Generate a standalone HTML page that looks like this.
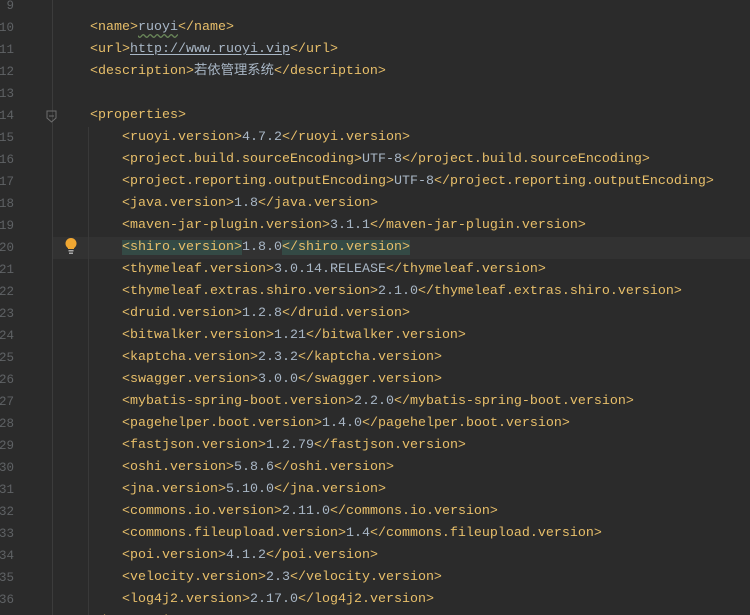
<!DOCTYPE html>
<html style="overflow:hidden;height:615px"><head><style>
body{margin:0;width:750px;height:615px;overflow:hidden;background:#2b2b2b;font-family:"Liberation Mono","Noto Sans CJK SC",monospace;font-size:13.33px;position:relative}
.g{position:absolute;left:0;top:0;width:52px;height:615px;background:#2b2b2b;border-right:1px solid #3c3c3c}
.cur{position:absolute;left:53px;width:697px;height:22px;top:237px;background:#323232}
.ln{position:absolute;left:-10px;width:24px;text-align:right;color:#5f6265;font-size:12.5px;line-height:22px}
.l{position:absolute;line-height:22px;white-space:pre;color:#a9b7c6}
.t{color:#e8bf6a}
.h{background:#344a45}
.ig{position:absolute;left:88px;top:127px;width:1px;height:488px;background:#393939}
.sq{text-decoration:underline wavy #6a8759;text-underline-offset:3px}
</style></head><body>
<div class="g"></div>
<div class="cur"></div>
<div class="ig"></div>
<div id="c"></div>
<svg style="position:absolute;left:46px;top:110px" width="11" height="13"><path d="M1 1H10V8L5.5 12L1 8Z" fill="none" stroke="#6e6e6e"/><path d="M3 6H8" stroke="#6e6e6e"/></svg>
<svg style="position:absolute;left:64px;top:237px" width="14" height="18"><circle cx="7" cy="6.5" r="5.5" fill="#f0a732"/><rect x="4" y="10" width="6" height="2" fill="#f0a732"/><rect x="4.5" y="13" width="5" height="1.5" fill="#aaa"/><rect x="5" y="15.5" width="4" height="1.5" fill="#aaa"/></svg>
<script>
var L=[
[9,0,''],[10,90,'<name>','ruoyi','</name>'],[11,90,'<url>','http://www.ruoyi.vip','</url>'],[12,90,'<description>','若依管理系统','</description>'],[13,0,''],[14,90,'<properties>','',''],
[15,122,'<ruoyi.version>','4.7.2','</ruoyi.version>'],
[16,122,'<project.build.sourceEncoding>','UTF-8','</project.build.sourceEncoding>'],
[17,122,'<project.reporting.outputEncoding>','UTF-8','</project.reporting.outputEncoding>'],
[18,122,'<java.version>','1.8','</java.version>'],
[19,122,'<maven-jar-plugin.version>','3.1.1','</maven-jar-plugin.version>'],
[20,122,'<shiro.version>','1.8.0','</shiro.version>'],
[21,122,'<thymeleaf.version>','3.0.14.RELEASE','</thymeleaf.version>'],
[22,122,'<thymeleaf.extras.shiro.version>','2.1.0','</thymeleaf.extras.shiro.version>'],
[23,122,'<druid.version>','1.2.8','</druid.version>'],
[24,122,'<bitwalker.version>','1.21','</bitwalker.version>'],
[25,122,'<kaptcha.version>','2.3.2','</kaptcha.version>'],
[26,122,'<swagger.version>','3.0.0','</swagger.version>'],
[27,122,'<mybatis-spring-boot.version>','2.2.0','</mybatis-spring-boot.version>'],
[28,122,'<pagehelper.boot.version>','1.4.0','</pagehelper.boot.version>'],
[29,122,'<fastjson.version>','1.2.79','</fastjson.version>'],
[30,122,'<oshi.version>','5.8.6','</oshi.version>'],
[31,122,'<jna.version>','5.10.0','</jna.version>'],
[32,122,'<commons.io.version>','2.11.0','</commons.io.version>'],
[33,122,'<commons.fileupload.version>','1.4','</commons.fileupload.version>'],
[34,122,'<poi.version>','4.1.2','</poi.version>'],
[35,122,'<velocity.version>','2.3','</velocity.version>'],
[36,122,'<log4j2.version>','2.17.0','</log4j2.version>'],
[37,90,'</properties>','','']];
function e(s){return s.replace(/&/g,'&amp;').replace(/</g,'&lt;').replace(/>/g,'&gt;')}
var h='';
L.forEach(function(r){var top=-5+(r[0]-9)*22;
if(r[0]<37)h+='<div class="ln" style="top:'+top+'px">'+r[0]+'</div>';
if(!r[2])return;
var a=e(r[2]),b=e(r[3]),c=e(r[4]);
if(r[0]==20){a='<span class="h">'+a+'</span>';c='<span class="h">'+c+'</span>';}
if(r[0]==10)b='<span class="sq">'+b+'</span>';
if(r[0]==11)b='<span style="text-decoration:underline;text-underline-offset:2px">'+b+'</span>';
h+='<div class="l" style="left:'+r[1]+'px;top:'+top+'px"><span class="t">'+a+'</span>'+b+'<span class="t">'+c+'</span></div>';});
document.getElementById('c').innerHTML=h;
</script>
</body></html>
